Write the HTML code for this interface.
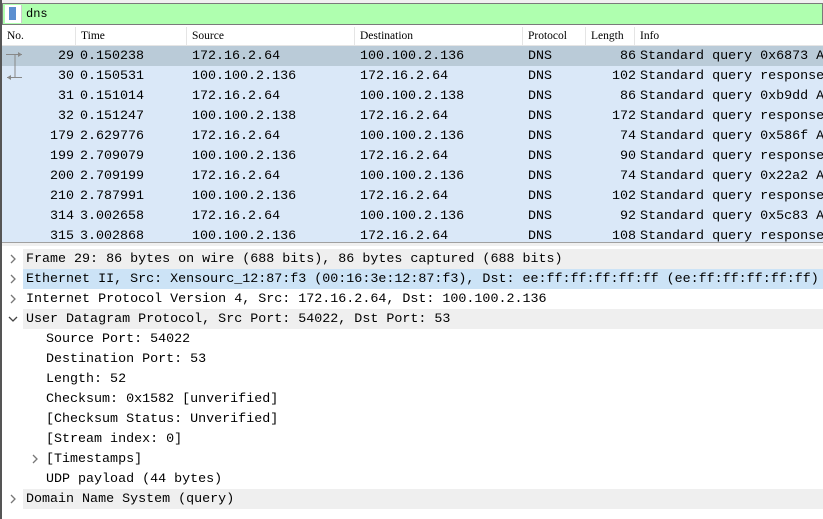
<!DOCTYPE html>
<html><head><style>
*{margin:0;padding:0;box-sizing:border-box}
body{width:823px;height:519px;overflow:hidden;background:#fff;font-family:"Liberation Mono",monospace;font-size:13.35px;color:#000;position:relative}
.lb{position:absolute;left:0;top:0;width:2px;height:519px;background:#555}
.top{position:absolute;left:0;top:0;width:823px;height:3px;background:#f0f0f0}
.filter{position:absolute;left:2px;top:3px;width:821px;height:22px;border:1px solid #7a7a7a;background:#afffaf}
.filter .bm{position:absolute;left:2px;top:1px;width:17px;height:18px;background:#fff;border-right:1px solid #ccc}
.filter .bm i{position:absolute;left:4px;top:2px;width:7px;height:13px;background:#5b8fd0}
.filter span{position:absolute;left:23px;top:3px;font-size:12px}
.hdr{position:absolute;left:2px;top:27px;width:821px;height:19px;background:#fff;border-bottom:1px solid #e5e5e5;font-family:"Liberation Serif",serif;font-size:11.5px}
.hdr div{position:absolute;top:0;height:19px;line-height:19px;padding-left:5px;border-right:1px solid #e5e5e5}
.row{position:absolute;left:2px;width:821px;height:20px;line-height:21px;background:#dae8f8;white-space:nowrap;overflow:hidden}
.row span{position:absolute;top:0}
.r{text-align:right}
.list{position:absolute;left:0;top:46px;width:823px;height:196px;overflow:hidden}
.split{position:absolute;left:2px;top:242px;width:821px;height:4px;background:#f0f0f0;border-top:1px solid #a0a0a0}
.d{position:absolute;left:2px;width:821px;height:20px;line-height:21px;white-space:nowrap}
.d .bg{position:absolute;left:21px;right:0;top:0;bottom:0}
.d .t{position:absolute;left:24px;top:0}
.d svg{position:absolute;left:6px;top:5px}
.d.c .t{left:44px}
</style></head><body>
<div class="top"></div>
<div class="filter"><div class="bm"><i></i></div><span>dns</span></div>
<div class="hdr">
<div style="left:0;width:74px">No.</div>
<div style="left:74px;width:111px">Time</div>
<div style="left:185px;width:168px">Source</div>
<div style="left:353px;width:168px">Destination</div>
<div style="left:521px;width:63px">Protocol</div>
<div style="left:584px;width:49px">Length</div>
<div style="left:633px;width:188px;border:none">Info</div>
</div>
<div class="list">
<div class="row" style="top:0;background:#bacbd8"><svg style="position:absolute;left:2px;top:3px" width="20" height="17"><path d="M2 5.5H18M11 5.5V17" stroke="#888" fill="none"/><path d="M14 3L18 5.5L14 8Z" fill="#888"/></svg><span class="r" style="left:20px;width:52px">29</span><span style="left:78px">0.150238</span><span style="left:190px">172.16.2.64</span><span style="left:358px">100.100.2.136</span><span style="left:526px">DNS</span><span class="r" style="left:590px;width:44px">86</span><span style="left:638px">Standard query 0x6873 A</span></div>
<div class="row" style="top:20px"><svg style="position:absolute;left:2px;top:0" width="20" height="17"><path d="M11 0V11.5M3 11.5H18" stroke="#888" fill="none"/><path d="M7 9L3 11.5L7 14Z" fill="#888"/></svg><span class="r" style="left:20px;width:52px">30</span><span style="left:78px">0.150531</span><span style="left:190px">100.100.2.136</span><span style="left:358px">172.16.2.64</span><span style="left:526px">DNS</span><span class="r" style="left:590px;width:44px">102</span><span style="left:638px">Standard query response</span></div>
<div class="row" style="top:40px"><span class="r" style="left:20px;width:52px">31</span><span style="left:78px">0.151014</span><span style="left:190px">172.16.2.64</span><span style="left:358px">100.100.2.138</span><span style="left:526px">DNS</span><span class="r" style="left:590px;width:44px">86</span><span style="left:638px">Standard query 0xb9dd A</span></div>
<div class="row" style="top:60px"><span class="r" style="left:20px;width:52px">32</span><span style="left:78px">0.151247</span><span style="left:190px">100.100.2.138</span><span style="left:358px">172.16.2.64</span><span style="left:526px">DNS</span><span class="r" style="left:590px;width:44px">172</span><span style="left:638px">Standard query response</span></div>
<div class="row" style="top:80px"><span class="r" style="left:20px;width:52px">179</span><span style="left:78px">2.629776</span><span style="left:190px">172.16.2.64</span><span style="left:358px">100.100.2.136</span><span style="left:526px">DNS</span><span class="r" style="left:590px;width:44px">74</span><span style="left:638px">Standard query 0x586f A</span></div>
<div class="row" style="top:100px"><span class="r" style="left:20px;width:52px">199</span><span style="left:78px">2.709079</span><span style="left:190px">100.100.2.136</span><span style="left:358px">172.16.2.64</span><span style="left:526px">DNS</span><span class="r" style="left:590px;width:44px">90</span><span style="left:638px">Standard query response</span></div>
<div class="row" style="top:120px"><span class="r" style="left:20px;width:52px">200</span><span style="left:78px">2.709199</span><span style="left:190px">172.16.2.64</span><span style="left:358px">100.100.2.136</span><span style="left:526px">DNS</span><span class="r" style="left:590px;width:44px">74</span><span style="left:638px">Standard query 0x22a2 A</span></div>
<div class="row" style="top:140px"><span class="r" style="left:20px;width:52px">210</span><span style="left:78px">2.787991</span><span style="left:190px">100.100.2.136</span><span style="left:358px">172.16.2.64</span><span style="left:526px">DNS</span><span class="r" style="left:590px;width:44px">102</span><span style="left:638px">Standard query response</span></div>
<div class="row" style="top:160px"><span class="r" style="left:20px;width:52px">314</span><span style="left:78px">3.002658</span><span style="left:190px">172.16.2.64</span><span style="left:358px">100.100.2.136</span><span style="left:526px">DNS</span><span class="r" style="left:590px;width:44px">92</span><span style="left:638px">Standard query 0x5c83 A</span></div>
<div class="row" style="top:180px"><span class="r" style="left:20px;width:52px">315</span><span style="left:78px">3.002868</span><span style="left:190px">100.100.2.136</span><span style="left:358px">172.16.2.64</span><span style="left:526px">DNS</span><span class="r" style="left:590px;width:44px">108</span><span style="left:638px">Standard query response</span></div>
</div>
<div class="split"></div>
<div class="d" style="top:249px"><div class="bg" style="background:#efefef"></div><svg width="10" height="10"><path d="M3 1L7 5L3 9" stroke="#777" stroke-width="1.3" fill="none"/></svg><span class="t">Frame 29: 86 bytes on wire (688 bits), 86 bytes captured (688 bits)</span></div>
<div class="d" style="top:269px"><div class="bg" style="background:#cce3f6"></div><svg width="10" height="10"><path d="M3 1L7 5L3 9" stroke="#777" stroke-width="1.3" fill="none"/></svg><span class="t">Ethernet II, Src: Xensourc_12:87:f3 (00:16:3e:12:87:f3), Dst: ee:ff:ff:ff:ff:ff (ee:ff:ff:ff:ff:ff)</span></div>
<div class="d" style="top:289px"><svg width="10" height="10"><path d="M3 1L7 5L3 9" stroke="#777" stroke-width="1.3" fill="none"/></svg><span class="t">Internet Protocol Version 4, Src: 172.16.2.64, Dst: 100.100.2.136</span></div>
<div class="d" style="top:309px"><div class="bg" style="background:#efefef"></div><svg width="10" height="10"><path d="M1 3L5 7L9 3" stroke="#444" stroke-width="1.3" fill="none"/></svg><span class="t">User Datagram Protocol, Src Port: 54022, Dst Port: 53</span></div>
<div class="d c" style="top:329px"><span class="t">Source Port: 54022</span></div>
<div class="d c" style="top:349px"><span class="t">Destination Port: 53</span></div>
<div class="d c" style="top:369px"><span class="t">Length: 52</span></div>
<div class="d c" style="top:389px"><span class="t">Checksum: 0x1582 [unverified]</span></div>
<div class="d c" style="top:409px"><span class="t">[Checksum Status: Unverified]</span></div>
<div class="d c" style="top:429px"><span class="t">[Stream index: 0]</span></div>
<div class="d c" style="top:449px"><svg width="10" height="10" style="left:28px"><path d="M3 1L7 5L3 9" stroke="#777" stroke-width="1.3" fill="none"/></svg><span class="t">[Timestamps]</span></div>
<div class="d c" style="top:469px"><span class="t">UDP payload (44 bytes)</span></div>
<div class="d" style="top:489px"><div class="bg" style="background:#efefef"></div><svg width="10" height="10"><path d="M3 1L7 5L3 9" stroke="#777" stroke-width="1.3" fill="none"/></svg><span class="t">Domain Name System (query)</span></div>
<div class="lb"></div>
</body></html>
